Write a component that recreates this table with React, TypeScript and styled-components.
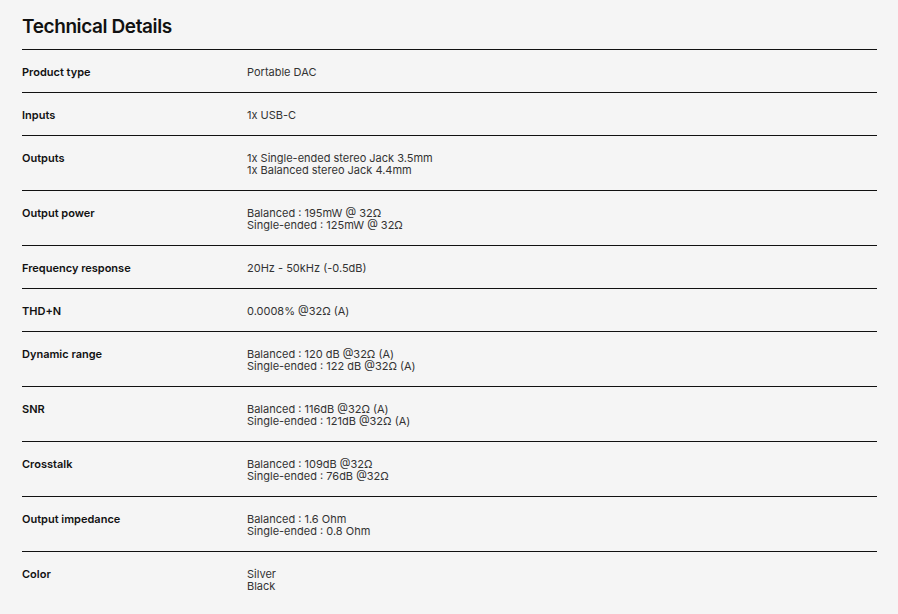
import styled, { createGlobalStyle } from "styled-components";

const GlobalStyle = createGlobalStyle`
  body {
    margin: 0;
    background: #f5f5f5;
    font-family: Inter, "Noto Sans", sans-serif;
    color: #111;
  }
`;

const Section = styled.section`
  padding: 15px 21px 0 22px;
`;

const Title = styled.h2`
  margin: 0 0 10px;
  font-size: 19px;
  line-height: 24px;
  font-weight: 600;
  letter-spacing: -0.4px;
  color: #111;
`;

const Table = styled.div``;

const Row = styled.div`
  display: grid;
  grid-template-columns: 225px 1fr;
  padding: 16px 0 14px;
  border-top: 1px solid #111;
  font-size: 11px;
  line-height: 12px;
`;

const Label = styled.div`
  font-weight: 600;
  color: #111;
`;

const Value = styled.div`
  color: #333;
  font-weight: 400;
`;

/* Data */
const specs: [string, string[]][] = [
  ["Product type", ["Portable DAC"]],
  ["Inputs", ["1x USB-C"]],
  ["Outputs", ["1x Single-ended stereo Jack 3.5mm", "1x Balanced stereo Jack 4.4mm"]],
  ["Output power", ["Balanced : 195mW @ 32Ω", "Single-ended : 125mW @ 32Ω"]],
  ["Frequency response", ["20Hz - 50kHz (-0.5dB)"]],
  ["THD+N", ["0.0008% @32Ω (A)"]],
  ["Dynamic range", ["Balanced : 120 dB @32Ω (A)", "Single-ended : 122 dB @32Ω (A)"]],
  ["SNR", ["Balanced : 116dB @32Ω (A)", "Single-ended : 121dB @32Ω (A)"]],
  ["Crosstalk", ["Balanced : 109dB @32Ω", "Single-ended : 76dB @32Ω"]],
  ["Output impedance", ["Balanced : 1.6 Ohm", "Single-ended : 0.8 Ohm"]],
  ["Color", ["Silver", "Black"]],
];

export default function App() {
  return (
    <>
      <GlobalStyle />
      <Section>
        <Title>Technical Details</Title>
        <Table>
          {specs.map(([label, lines]) => (
            <Row key={label}>
              <Label>{label}</Label>
              <Value>
                {lines.map((line) => (
                  <div key={line}>{line}</div>
                ))}
              </Value>
            </Row>
          ))}
        </Table>
      </Section>
    </>
  );
}
